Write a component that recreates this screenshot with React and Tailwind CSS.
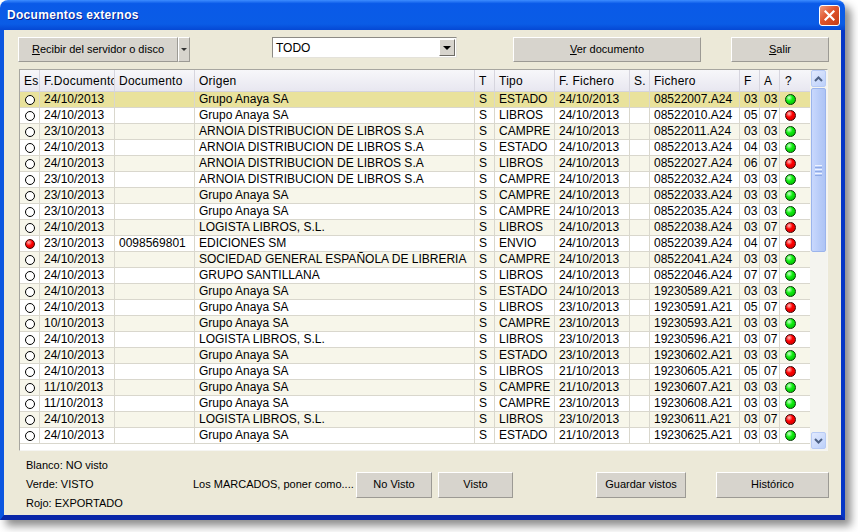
import React from 'react'

const rows = [
  ['o', '24/10/2013', '', 'Grupo Anaya SA', 'S', 'ESTADO', '24/10/2013', '', '08522007.A24', '03', '03', 'g'],
  ['o', '24/10/2013', '', 'Grupo Anaya SA', 'S', 'LIBROS', '24/10/2013', '', '08522010.A24', '05', '07', 'r'],
  ['o', '23/10/2013', '', 'ARNOIA DISTRIBUCION DE LIBROS S.A', 'S', 'CAMPRE', '24/10/2013', '', '08522011.A24', '03', '03', 'g'],
  ['o', '24/10/2013', '', 'ARNOIA DISTRIBUCION DE LIBROS S.A', 'S', 'ESTADO', '24/10/2013', '', '08522013.A24', '04', '03', 'g'],
  ['o', '24/10/2013', '', 'ARNOIA DISTRIBUCION DE LIBROS S.A', 'S', 'LIBROS', '24/10/2013', '', '08522027.A24', '06', '07', 'r'],
  ['o', '23/10/2013', '', 'ARNOIA DISTRIBUCION DE LIBROS S.A', 'S', 'CAMPRE', '24/10/2013', '', '08522032.A24', '03', '03', 'g'],
  ['o', '23/10/2013', '', 'Grupo Anaya SA', 'S', 'CAMPRE', '24/10/2013', '', '08522033.A24', '03', '03', 'g'],
  ['o', '23/10/2013', '', 'Grupo Anaya SA', 'S', 'CAMPRE', '24/10/2013', '', '08522035.A24', '03', '03', 'g'],
  ['o', '24/10/2013', '', 'LOGISTA LIBROS, S.L.', 'S', 'LIBROS', '24/10/2013', '', '08522038.A24', '03', '07', 'r'],
  ['r', '23/10/2013', '0098569801', 'EDICIONES SM', 'S', 'ENVIO', '24/10/2013', '', '08522039.A24', '04', '07', 'r'],
  ['o', '24/10/2013', '', 'SOCIEDAD GENERAL ESPAÑOLA DE LIBRERIA', 'S', 'CAMPRE', '24/10/2013', '', '08522041.A24', '03', '03', 'g'],
  ['o', '24/10/2013', '', 'GRUPO SANTILLANA', 'S', 'LIBROS', '24/10/2013', '', '08522046.A24', '07', '07', 'g'],
  ['o', '24/10/2013', '', 'Grupo Anaya SA', 'S', 'ESTADO', '24/10/2013', '', '19230589.A21', '03', '03', 'g'],
  ['o', '24/10/2013', '', 'Grupo Anaya SA', 'S', 'LIBROS', '23/10/2013', '', '19230591.A21', '05', '07', 'r'],
  ['o', '10/10/2013', '', 'Grupo Anaya SA', 'S', 'CAMPRE', '23/10/2013', '', '19230593.A21', '03', '03', 'g'],
  ['o', '24/10/2013', '', 'LOGISTA LIBROS, S.L.', 'S', 'LIBROS', '23/10/2013', '', '19230596.A21', '03', '07', 'r'],
  ['o', '24/10/2013', '', 'Grupo Anaya SA', 'S', 'ESTADO', '23/10/2013', '', '19230602.A21', '03', '03', 'g'],
  ['o', '24/10/2013', '', 'Grupo Anaya SA', 'S', 'LIBROS', '21/10/2013', '', '19230605.A21', '05', '07', 'r'],
  ['o', '11/10/2013', '', 'Grupo Anaya SA', 'S', 'CAMPRE', '21/10/2013', '', '19230607.A21', '03', '03', 'g'],
  ['o', '11/10/2013', '', 'Grupo Anaya SA', 'S', 'CAMPRE', '23/10/2013', '', '19230608.A21', '03', '03', 'g'],
  ['o', '24/10/2013', '', 'LOGISTA LIBROS, S.L.', 'S', 'LIBROS', '23/10/2013', '', '19230611.A21', '03', '07', 'r'],
  ['o', '24/10/2013', '', 'Grupo Anaya SA', 'S', 'ESTADO', '21/10/2013', '', '19230625.A21', '03', '03', 'g'],
]

const headers = ['Es', 'F.Documento', 'Documento', 'Origen', 'T', 'Tipo', 'F. Fichero', 'S.', 'Fichero', 'F', 'A', '?']

const cols = 'grid grid-cols-[20px_75px_80px_280px_20px_60px_75px_20px_90px_20px_20px_30px]'

function Marker({ kind }) {
  if (kind === 'r') {
    return (
      <div className="w-[10px] h-[10px] rounded-full border border-[#400000] bg-[radial-gradient(circle_at_35%_30%,#ffb0b0,#ff0000_45%,#c00000)]" />
    )
  }
  return <div className="w-[10px] h-[10px] rounded-full border border-black bg-white" />
}

function Dot({ kind }) {
  if (kind === 'r') {
    return (
      <div className="w-[11px] h-[11px] rounded-full border border-[#3a0000] bg-[radial-gradient(circle_at_35%_30%,#ffc0c0,#ff0000_40%,#c80000)]" />
    )
  }
  return (
    <div className="w-[11px] h-[11px] rounded-full border border-[#003a00] bg-[radial-gradient(circle_at_35%_30%,#d0ffd0,#10ee10_40%,#00b000)]" />
  )
}

function Button({ className = '', children }) {
  return (
    <div
      className={
        'flex items-center justify-center bg-[#d7d4cd] border border-t-white border-l-white border-r-[#9c9a94] border-b-[#9c9a94] text-[11px] text-black ' +
        className
      }
    >
      {children}
    </div>
  )
}

function Chevron({ up }) {
  return (
    <svg width="9" height="6" viewBox="0 0 9 6">
      <path
        d={up ? 'M1 5 L4.5 1.5 L8 5' : 'M1 1 L4.5 4.5 L8 1'}
        fill="none"
        stroke="#4d6185"
        strokeWidth="2"
      />
    </svg>
  )
}

function Scrollbar() {
  return (
    <div className="w-[17px] flex flex-col bg-[#f4f4ef] px-[1px]">
      <div className="h-[17px] rounded-[2px] border border-[#b8cbf5] bg-[linear-gradient(135deg,#e2eafe,#bcd0fa)] flex items-center justify-center">
        <Chevron up />
      </div>
      <div className="mt-[1px] h-[164px] rounded-[2px] border border-[#9bb4ec] bg-[linear-gradient(90deg,#c9d8fd,#b7cbf8_60%,#aec4f5)] flex flex-col items-center justify-center gap-[1px]">
        <div className="w-[7px] h-[1px] bg-[#eef3ff]" />
        <div className="w-[7px] h-[1px] bg-[#8faae6]" />
        <div className="w-[7px] h-[1px] bg-[#eef3ff]" />
        <div className="w-[7px] h-[1px] bg-[#8faae6]" />
        <div className="w-[7px] h-[1px] bg-[#eef3ff]" />
        <div className="w-[7px] h-[1px] bg-[#8faae6]" />
      </div>
      <div className="flex-1" />
      <div className="h-[17px] mb-[1px] rounded-[2px] border border-[#b8cbf5] bg-[linear-gradient(135deg,#e2eafe,#bcd0fa)] flex items-center justify-center">
        <Chevron />
      </div>
    </div>
  )
}

function Grid() {
  return (
    <div className="ml-[1px] mt-[7px] w-[809px] h-[382px] flex border border-t-[#a7a6a0] border-l-[#a7a6a0] border-r-[#f5f5f2] border-b-[#f5f5f2] text-[12px] text-black">
      <div className="w-[790px] flex flex-col bg-white">
        <div className={cols + ' h-[22px] bg-[linear-gradient(#f7f7fa,#e8e7f0)] border-b border-[#d5d4dc] tracking-[0.25px]'}>
          {headers.map((h, i) => (
            <div
              key={i}
              className={
                'flex items-center overflow-hidden whitespace-nowrap border-r border-[#d6d5de] ' +
                (i === 11 ? 'pl-[5px] border-r-0' : 'pl-[4px]')
              }
            >
              {h}
            </div>
          ))}
        </div>
        {rows.map((r, ri) => {
          const bg = ri === 0 ? 'bg-[#e9e29c]' : ri % 2 === 0 ? 'bg-[#f7f6ea]' : 'bg-white'
          return (
            <div key={ri} className={cols + ' h-[16px] ' + bg}>
              {r.map((c, ci) => {
                if (ci === 0) {
                  return (
                    <div key={ci} className="flex items-center justify-center border-r border-b border-[#d9d7cd]">
                      <Marker kind={c} />
                    </div>
                  )
                }
                if (ci === 11) {
                  return (
                    <div key={ci} className="flex items-center pl-[5px] border-b border-[#d9d7cd]">
                      <Dot kind={c} />
                    </div>
                  )
                }
                return (
                  <div
                    key={ci}
                    className="flex items-center pl-[4px] overflow-hidden whitespace-nowrap leading-[15px] border-r border-b border-[#d9d7cd]"
                  >
                    {c}
                  </div>
                )
              })}
            </div>
          )
        })}
      </div>
      <Scrollbar />
    </div>
  )
}

export default function App() {
  return (
    <div className="w-[858px] h-[532px] bg-white font-['Liberation_Sans',Arial,sans-serif]">
      <div className="w-[845px] h-[520px] flex flex-col rounded-t-[8px] shadow-[6px_6px_8px_rgba(0,0,0,0.45)]">
        {/* title bar */}
        <div className="h-[30px] flex items-center justify-between pl-[7px] pr-[5px] rounded-t-[8px] bg-[linear-gradient(#3d8cff,#0a5ae8_12%,#0a5ce6_80%,#0548d4)]">
          <span className="text-white font-bold text-[12px] tracking-[0.3px] [text-shadow:1px_1px_0_#0a1e8c]">
            Documentos externos
          </span>
          <div className="w-[21px] h-[21px] rounded-[3px] border border-white bg-[linear-gradient(135deg,#ef9a7c,#e0542c_45%,#c33c14)] flex items-center justify-center">
            <svg width="11" height="11" viewBox="0 0 11 11">
              <path d="M1.5 1.5 L9.5 9.5 M9.5 1.5 L1.5 9.5" stroke="white" strokeWidth="2.2" strokeLinecap="square" />
            </svg>
          </div>
        </div>
        {/* client */}
        <div className="flex-1 flex flex-col bg-[#ece9d8] border-l-4 border-r-4 border-b-[5px] border-l-[#0b56e0] border-r-[#0536c6] border-b-[#0a27a8] pl-[14px] pt-[7px]">
          {/* toolbar */}
          <div className="h-[25px] flex items-start">
            <div className="flex h-[25px]">
              <Button className="w-[160px] h-[25px]">
                <span>
                  <span className="underline">R</span>ecibir del servidor o disco
                </span>
              </Button>
              <div className="w-[12px] h-[25px] flex items-center justify-center bg-[#d7d4cd] border border-t-white border-l-white border-r-[#9c9a94] border-b-[#9c9a94]">
                <div className="w-0 h-0 border-l-[3px] border-r-[3px] border-t-[3px] border-l-transparent border-r-transparent border-t-[#333]" />
              </div>
            </div>
            <div className="ml-[82px] w-[185px] h-[21px] flex items-center bg-white border border-t-[#8c8a84] border-l-[#8c8a84] border-r-[#e4e2da] border-b-[#e4e2da] pr-[1px]">
              <span className="flex-1 pl-[3px] text-[12px]">TODO</span>
              <div className="w-[16px] h-[17px] flex items-center justify-center bg-[#d7d4cd] border border-t-white border-l-white border-r-[#6e6c66] border-b-[#6e6c66]">
                <div className="w-0 h-0 border-l-[4px] border-r-[4px] border-t-[4px] border-l-transparent border-r-transparent border-t-black" />
              </div>
            </div>
            <Button className="ml-[56px] w-[188px] h-[25px]">
              <span>
                <span className="underline">V</span>er documento
              </span>
            </Button>
            <Button className="ml-[30px] w-[98px] h-[25px]">
              <span>
                <span className="underline">S</span>alir
              </span>
            </Button>
          </div>

          <Grid />

          {/* bottom */}
          <div className="mt-[5px] flex items-center text-[11px] text-black">
            <div className="pl-[8px] w-[175px] flex flex-col leading-[19px]">
              <span>Blanco: NO visto</span>
              <span>Verde: VISTO</span>
              <span>Rojo: EXPORTADO</span>
            </div>
            <span className="w-[163px] whitespace-nowrap">Los MARCADOS, poner como....</span>
            <Button className="w-[76px] h-[26px]">No Visto</Button>
            <Button className="ml-[6px] w-[75px] h-[26px]">Visto</Button>
            <Button className="ml-[83px] w-[90px] h-[26px]">Guardar vistos</Button>
            <Button className="ml-[30px] w-[113px] h-[26px]">Histórico</Button>
          </div>
        </div>
      </div>
    </div>
  )
}
